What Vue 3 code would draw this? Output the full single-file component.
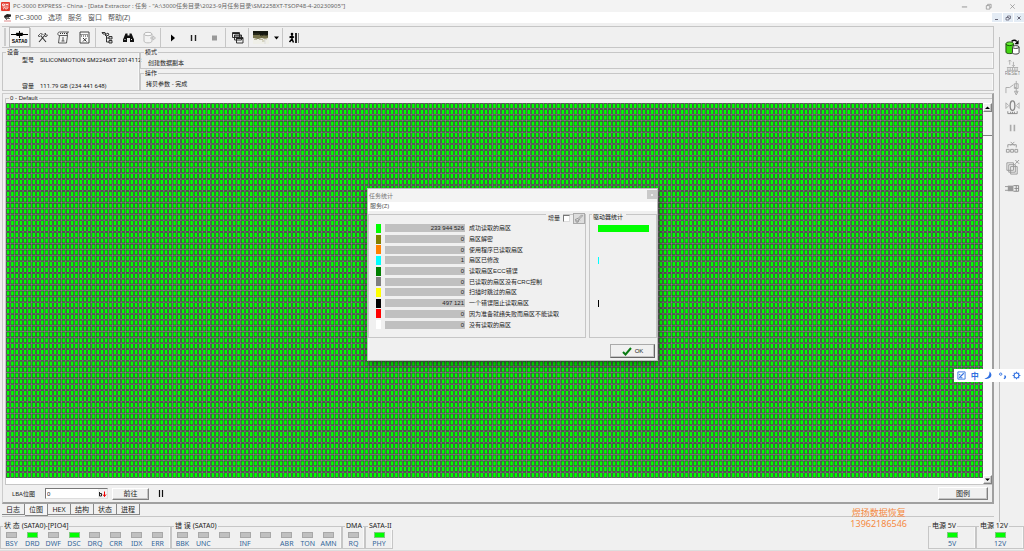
<script setup>
import { ref } from 'vue'

const menus = ['PC-3000', '选项', '服务', '窗口', '帮助(Z)']
const tabs = ['日志', '位图', 'HEX', '结构', '状态', '进程']
const activeTab = ref('位图')
const lba = ref('0')
const increment = ref(false)

// Sector map: 229 columns of 8 units and 64 rows of 11 units.
const columns = 229
const rows = 64
const mapWidth = columns * 8
const mapHeight = rows * 11
const verticals = Array.from({ length: columns + 1 }, (_, i) => `M${i * 8} 0V${mapHeight}`).join('')
const horizontals = Array.from({ length: rows + 1 }, (_, i) => `M0 ${i * 11}H${mapWidth}`).join('')
const gridLines = verticals + horizontals

const stats = [
  { color: '#00ff00', value: '233 944 526', label: '成功读取的扇区', bar: 51 },
  { color: '#808000', value: '0', label: '扇区解密', bar: 0 },
  { color: '#ff8000', value: '0', label: '使用程序已读取扇区', bar: 0 },
  { color: '#00ffff', value: '1', label: '扇区已修改', bar: 1 },
  { color: '#008000', value: '0', label: '读取扇区ECC错误', bar: 0 },
  { color: '#808080', value: '0', label: '已读取的扇区没有CRC控制', bar: 0 },
  { color: '#ffff00', value: '0', label: '扫描时跳过的扇区', bar: 0 },
  { color: '#000000', value: '497 121', label: '一个错误阻止读取扇区', bar: 1 },
  { color: '#ff0000', value: '0', label: '因为准备就绪失败而扇区不能读取', bar: 0 },
  { color: '#ffffff', value: '0', label: '没有读取的扇区', bar: 0 }
]

const led = (name, on = false) => ({ name, on })
const groups = [
  { title: '状 态 (SATA0)-[PIO4]', size: 'wide', leds: [led('BSY'), led('DRD', true), led('DWF'), led('DSC', true), led('DRQ'), led('CRR'), led('IDX'), led('ERR')] },
  { title: '错 误 (SATA0)', size: 'wide', leds: [led('BBK'), led('UNC'), led(''), led('INF'), led(''), led('ABR'), led('TON'), led('AMN')] },
  { title: 'DMA', size: 'small', leds: [led('RQ')] },
  { title: 'SATA-II', size: 'medium', leds: [led('PHY', true)] }
]
const power = [
  { title: '电源 5V', size: 'power', leds: [led('5V', true)] },
  { title: '电源 12V', size: 'power', leds: [led('12V', true)] }
]
</script>

<template>
  <div class="window">
    <header class="titlebar">
      <svg class="logo" viewBox="0 0 9 9"><rect width="9" height="9" rx="1" fill="#e33a2e" /><path d="M1.5 2h2v1.5h-2zM5 1.5v2.2M7 1.5v2.2M5 2.5h2M1.5 5h6M2 7.2l1.5-1.4L5 7.2l2.2-1.4" fill="none" stroke="#fff" stroke-width=".8" /></svg>
      <h1>PC-3000 EXPRESS - China - [Data Extractor : 任务 - "A:\3000任务目录\2023-9月任务目录\SM2258XT-TSOP48-4-20230905"]</h1>
      <div class="caption">
        <button aria-label="最小化"><svg viewBox="0 0 8 8"><path d="M1 4.5h6" stroke="#8a8a8a" fill="none" /></svg></button>
        <button aria-label="还原"><svg viewBox="0 0 8 8"><path d="M1.5 3h4v4h-4zM3 3V1.5h4V5.500H5.500" stroke="#8a8a8a" fill="none" stroke-width=".8" /></svg></button>
        <button aria-label="关闭"><svg viewBox="0 0 8 8"><path d="M1.500 1.500l5 5M6.500 1.500l-5 5" stroke="#8a8a8a" fill="none" stroke-width=".8" /></svg></button>
      </div>
    </header>

    <nav class="menubar">
      <svg class="logo" viewBox="0 0 9 9"><path d="M1 3l3-2 4 0.500v2L5 4.500 1.500 5z" fill="#222" /><path d="M2 5.500h5M3 7l3-3" stroke="#666" /><path d="M1 8h7" stroke="#d88" /></svg>
      <button v-for="m in menus" :key="m">{{ m }}</button>
      <div class="mdi">
        <button aria-label="最小化窗口"><svg viewBox="0 0 8 8"><path d="M2 5.500h3" stroke="#667" /></svg></button>
        <button aria-label="还原窗口"><svg viewBox="0 0 8 8"><path d="M2 3.500h3v2.500H2zM3.500 3.500V2h3v2.500H5" stroke="#667" fill="none" stroke-width=".8" /></svg></button>
        <button aria-label="关闭窗口"><svg viewBox="0 0 8 8"><path d="M2.500 2.500l3 3M5.500 2.500l-3 3" stroke="#667" /></svg></button>
      </div>
    </nav>

    <div class="workspace">
      <main>
        <div class="toolbar">
          <i class="grip"></i>
          <button class="sata pressed" aria-label="SATA0">
            <svg viewBox="0 0 17 7"><path d="M0 3.500h17M8.500 0v7M5 2.300h7" stroke="#000" fill="none" /><path d="M4 3.500l2-1.500h5l2 1.500-2 1.500H6z" /></svg>
            <span>SATA0</span>
          </button>
          <i class="sep"></i>
          <button aria-label="工具"><svg viewBox="0 0 13 13"><path d="M3 11l6-7M10 11L5 5" stroke="#333" fill="none" stroke-width="1.100" /><path d="M2 5l2.500-2.500 2 .5-2.500 2.500zM8 3.500L9.500 2v2h2l-1 1.500H9z" fill="#fff" stroke="#333" stroke-width=".8" /></svg></button>
          <button aria-label="脚本"><svg viewBox="0 0 13 13"><path d="M2.500 4.500h8L9.500 12h-8zM2.500 4.500C0 4.500 .5 1 2.500 1h9c-1 0-1.500 2-1 3.500" fill="#f4f4f4" stroke="#333" stroke-width=".8" /><path d="M3 2.500h7" stroke="#333" stroke-dasharray="1 1" /><path d="M6 6v4M4.500 10h3" stroke="#555" /></svg></button>
          <button aria-label="资源"><svg viewBox="0 0 13 13"><path d="M2 1h9v11H2z" fill="#f8f8f8" stroke="#333" stroke-width=".9" /><path d="M2.500 3.500h8M3 5h7" stroke="#333" stroke-dasharray="1 1" /><path d="M5 7l3.500 3.500M8.500 7L5 10.500" stroke="#333" /></svg></button>
          <i class="sep"></i>
          <button aria-label="对象树"><svg viewBox="0 0 13 13"><path d="M1 1.500h3l1 1.500H2zM4 4l3-2 1 2-3 1zM5.500 5v6h3M5.500 7h3" stroke="#222" fill="none" stroke-width=".9" /><path d="M8 5.500h3V8H8zM8 9.500h3V12H8z" fill="#ccc" stroke="#222" stroke-width=".9" /></svg></button>
          <button aria-label="查找"><svg viewBox="0 0 13 13"><path d="M3.500 2.500h2v2h2v-2h2l2.500 6V11H8V7H5v4H1V8.500z" fill="#111" /><path d="M2.500 8.500h1M9 8.500h1" stroke="#eee" /></svg></button>
          <button aria-label="数据库"><svg viewBox="0 0 13 13"><path d="M1 3v7c0 2.500 8 2.500 8 0V3" fill="#f3f3f3" stroke="#bbb" /><ellipse cx="5" cy="3" rx="4" ry="1.700" fill="#fafafa" stroke="#bbb" /><path d="M7 7h3V5l2.500 2L10 9V7" stroke="#bbb" fill="#eee" /></svg></button>
          <i class="sep"></i>
          <button aria-label="开始"><svg viewBox="0 0 13 13"><path d="M5 3.500l4 3.500-4 3.500z" /></svg></button>
          <button aria-label="暂停"><svg viewBox="0 0 13 13"><path d="M4.500 4v6M8.500 4v6" stroke="#222" stroke-width="1.400" /></svg></button>
          <button aria-label="停止" disabled><svg viewBox="0 0 13 13"><rect x="4" y="4.500" width="5" height="5" fill="#999" /></svg></button>
          <i class="sep"></i>
          <button aria-label="窗口列表"><svg viewBox="0 0 13 13"><g fill="#eee" stroke="#222" stroke-width=".9"><path d="M1.500 1.500h7v5h-7zM3.500 4h7v5h-7zM5.500 6.500h6.500V12H5.500z" /></g><path d="M1.500 2.500h7M3.500 5h7M5.500 7.500H12" stroke="#222" /></svg></button>
          <i class="sep"></i>
          <button aria-label="位图视图"><svg class="picture" viewBox="0 0 16 14"><rect width="16" height="14" fill="#efefe8" /><path d="M0 1h15v4H0z" fill="#15180f" /><path d="M0 5h15v3l-3 1-3-1-4 1-5-1z" fill="#77734b" /><path d="M0 4h6l2 2 3-1 4 1" stroke="#3b3b25" fill="none" /><path d="M1 9.500h3m2 0h4m1-.5h3M9 11h3" stroke="#bbb79b" /><path d="M12 9v5" stroke="#ddd" /></svg></button>
          <button class="narrow" aria-label="视图选项"><svg viewBox="0 0 7 13"><path d="M1 5.500h5L3.500 8.500z" /></svg></button>
          <i class="sep"></i>
          <button aria-label="退出"><svg viewBox="0 0 13 13"><circle cx="4" cy="3" r="1.300" /><path d="M4 4v4l1.500 3.500M4 8l-2.500 3M1.500 6.500L4 5l2 1.500" stroke="#000" fill="none" stroke-width="1.500" /><path d="M8 2v10" stroke="#111" stroke-width="1.800" /><path d="M10.500 2v10" stroke="#888" /></svg></button>
        </div>

        <section class="info">
          <fieldset class="device">
            <legend>设备</legend>
            <dl>
              <dt>型号</dt><dd>SILICONMOTION SM2246XT 2014112</dd>
              <dt>容量</dt><dd>111.79 GB (234 441 648)</dd>
            </dl>
          </fieldset>
          <div class="modes">
            <fieldset><legend>模式</legend><p>创建数据副本</p></fieldset>
            <fieldset><legend>操作</legend><p>拷贝参数 - 完成</p></fieldset>
          </div>
        </section>

        <section class="mapframe">
          <fieldset class="mapgroup">
            <legend>0 - Default</legend>
            <div class="maprow">
              <div class="map">
                <svg :viewBox="`0 0 ${mapWidth} ${mapHeight}`" preserveAspectRatio="none" role="img" aria-label="扇区位图">
                  <rect :width="mapWidth" :height="mapHeight" fill="#00ff00" />
                  <path :d="gridLines" stroke="#262626" stroke-width="3" />
                  <path :d="gridLines" stroke="#b4a6b4" stroke-width="1" />
                </svg>
              </div>
              <div class="scroll">
                <button aria-label="向上滚动"><svg viewBox="0 0 7 7"><path d="M1 5h5L3.500 2.500z" /></svg></button>
                <i class="thumb"></i>
                <button class="down" aria-label="向下滚动"><svg viewBox="0 0 7 7"><path d="M1 2.500h5L3.500 5z" /></svg></button>
              </div>
            </div>
          </fieldset>
          <div class="lba">
            <label for="lba">LBA位图</label>
            <div class="lbabox">
              <input id="lba" v-model="lba" type="text">
              <button aria-label="进制"><svg viewBox="0 0 9 8"><path d="M1.500 2v4M1.500 3.500h2v2.500h-2" stroke="#222" fill="none" /><path d="M6.500 1.500v5M5 4.500l1.500 2L8 4.500" stroke="#e00" fill="none" /></svg></button>
            </div>
            <button class="raised go">前往</button>
            <button class="pause" aria-label="暂停位图"><svg viewBox="0 0 6 7"><path d="M1.500 0v7M4.500 0v7" stroke="#111" stroke-width="1.200" /></svg></button>
            <button class="raised key">图例</button>
          </div>
        </section>

        <div class="tabs" role="tablist">
          <button v-for="t in tabs" :key="t" role="tab" :aria-selected="t === activeTab" :class="{ active: t === activeTab }" @click="activeTab = t">{{ t }}</button>
        </div>
      </main>

      <aside>
        <button aria-label="数据任务"><svg viewBox="0 0 16 18"><path d="M1 5v9c0 2 8 2 8 0V5" fill="#43d613" stroke="#164b08" /><ellipse cx="5" cy="5" rx="4" ry="2" fill="#62ed32" stroke="#164b08" /><path d="M8 8.500v6c0 2 7 2 7 0v-6" fill="#fff" stroke="#333" /><ellipse cx="11.500" cy="8.500" rx="3.500" ry="1.500" fill="#fff" stroke="#333" /><path d="M7 2.500c2-1.500 4-1.500 5.500 0" fill="none" stroke="#000" stroke-width="1.500" /><path d="M14.500 1v4.500H10z" /></svg></button>
        <button aria-label="复位"><svg viewBox="0 0 16 18"><path d="M5 1v5M3.500 2.500L5 1l1.500 1.500M9 3v5M7.500 6.500L9 8l1.500-1.500M2 9h12M2 12h12M3 9v3m2.500-3v3M8 9v3m2.500-3v3M13 9v3" stroke="#aaa" fill="none" stroke-width=".9" /><text x="8" y="17.500" text-anchor="middle" font-size="5" font-family="Liberation Sans, sans-serif" fill="#888">RESET</text></svg></button>
        <button aria-label="电源开关"><svg viewBox="0 0 16 18"><path d="M1 15V9h4l4-3M10 9h2M12 2v13M10 5h4v5h-4zM10 13h4l-2 4z" stroke="#aaa" fill="none" /></svg></button>
        <button aria-label="接口"><svg viewBox="0 0 16 18"><ellipse cx="8" cy="7" rx="2.500" ry="5" stroke="#888" stroke-width="1.400" fill="none" /><path d="M1 4v6l3-3zM15 4v6l-3-3z" stroke="#aaa" fill="none" /><path d="M3 13v2.500h10V13M6 13.500v2M8 13.500v2M10 13.500v2" stroke="#888" fill="none" /></svg></button>
        <button aria-label="暂停任务"><svg viewBox="0 0 16 18"><path d="M6 6v7M10 6v7" stroke="#aaa" stroke-width="1.700" /></svg></button>
        <button aria-label="扇区编辑"><svg viewBox="0 0 16 18"><path d="M1.500 11h3v3h-3zM6 11h3v3H6zM10.500 11h3v3h-3zM3 9V6h9v3M6 3l4 4M10 3L6 7" stroke="#999" fill="none" /></svg></button>
        <button aria-label="复制任务"><svg viewBox="0 0 16 18"><g stroke="#999" fill="#f0f0f0"><path d="M2 4h7v8H2zM4 6h7v8H4zM6 8h7v8H6z" /></g><path d="M11 1l4 4M15 1l-4 4" stroke="#999" /></svg></button>
        <button aria-label="连接器"><svg viewBox="0 0 16 18"><path d="M0 8h7M0 12h7" stroke="#999" /><path d="M3 7h6v6H3z" fill="#999" /><path d="M9 7h5.500v6H9M10 10h4.500M12 7v6" stroke="#888" fill="none" /></svg></button>
      </aside>
    </div>

    <footer>
      <fieldset v-for="g in groups" :key="g.title" :class="g.size">
        <legend>{{ g.title }}</legend>
        <div class="leds"><span v-for="(l, i) in g.leds" :key="i" class="led" :class="{ on: l.on }"><i></i>{{ l.name }}</span></div>
      </fieldset>
      <span class="spacer"></span>
      <fieldset v-for="g in power" :key="g.title" :class="g.size">
        <legend>{{ g.title }}</legend>
        <div class="leds"><span v-for="l in g.leds" :key="l.name" class="led" :class="{ on: l.on }"><i></i>{{ l.name }}</span></div>
      </fieldset>
    </footer>

    <div class="watermark"><div>煜扬数据恢复</div><div>13962186546</div></div>

    <div class="ime">
      <svg viewBox="0 0 10 10"><path d="M1 1h8v8H1z" fill="none" stroke="#2f6fe0" /><path d="M2.500 7.500l5-5M2.500 3.500l1 1M4 7.500h2" stroke="#2f6fe0" stroke-width="1.200" /></svg>
      <span>中</span>
      <svg viewBox="0 0 10 10"><path d="M6 .5c5 4 1 9.500-5.500 8C4.500 7.500 6.500 4.500 6 .5z" fill="#2f6fe0" /></svg>
      <svg viewBox="0 0 10 10"><circle cx="3" cy="3.500" r="1.300" fill="none" stroke="#2f6fe0" /><path d="M7 5.500c2 0 1.500 2.500-.5 3" fill="none" stroke="#2f6fe0" stroke-width="1.500" /></svg>
      <svg viewBox="0 0 10 10"><circle cx="5" cy="5" r="2.700" fill="none" stroke="#2f6fe0" stroke-width="1.200" /><path d="M5 .7v1.500M5 7.800v1.500M.7 5h1.500M7.800 5h1.500M2 2l1 1M7 7l1 1M8 2L7 3M3 7L2 8" stroke="#2f6fe0" stroke-width="1.200" /></svg>
    </div>

    <section class="dialog" role="dialog" aria-labelledby="dlg-title">
      <header>
        <h2 id="dlg-title">任务统计</h2>
        <button aria-label="关闭统计"><svg viewBox="0 0 8 8"><path d="M3 3l2 2M5 3L3 5" stroke="#eee" /></svg></button>
      </header>
      <nav><button>服务(Z)</button></nav>
      <div class="panes">
        <div class="pane stats">
          <div class="options">
            <label for="inc">增量</label>
            <input id="inc" v-model="increment" type="checkbox">
            <button aria-label="清除"><svg viewBox="0 0 10 10"><path d="M1 6l3-1 4-4 1 1-4 4-1 3H2zM4 5l2 2M2 7l2 1" fill="#eee" stroke="#777" stroke-width=".8" /></svg></button>
          </div>
          <table>
            <tbody>
              <tr v-for="s in stats" :key="s.label">
                <td class="swatch"><i :style="{ background: s.color }"></i></td>
                <td class="value"><span>{{ s.value }}</span></td>
                <th scope="row">{{ s.label }}</th>
              </tr>
            </tbody>
          </table>
        </div>
        <div class="pane drive">
          <h3>驱动器统计</h3>
          <div class="bars"><div v-for="s in stats" :key="s.label"><i :style="{ width: s.bar + 'px', background: s.color }"></i></div></div>
        </div>
      </div>
      <div class="actions"><button class="raised"><svg viewBox="0 0 10 9"><path d="M1 5l2.500 2.500L9 1" fill="none" stroke="#087a12" stroke-width="2" /></svg>OK</button></div>
    </section>
  </div>
</template>

<style>
body { margin: 0; overflow: hidden; background: #f0f0f0; }
</style>

<style scoped>
* { box-sizing: border-box; }
.window { position: relative; display: flex; flex-direction: column; height: 100vh; background: #f0f0f0; color: #222; font: 6px/8px "Liberation Sans", "Noto Sans CJK SC", sans-serif; }
button, input { margin: 0; padding: 0; border: 0; background: none; color: inherit; font: inherit; border-radius: 0; }
h1, h2, h3, p, dl, dd { margin: 0; font: inherit; }
svg { display: block; }
fieldset { min-width: 0; margin: 0; padding: 0; border: 1px solid #c6c6c6; box-shadow: inset -1px 0 #f8f8f8; }
legend { margin-left: 3px; padding: 0 1px; line-height: 8px; }
button { display: flex; align-items: center; justify-content: center; }

.titlebar { display: flex; align-items: center; height: 12px; padding-left: 1px; background: #f3f3f3; color: #666; font: 6px/12px "Noto Sans", "Noto Sans CJK SC", sans-serif; }
.logo { width: 9px; height: 9px; margin-right: 3px; }
.titlebar h1 { white-space: nowrap; }
.caption { display: flex; margin-left: auto; }
.caption button { width: 24px; height: 12px; }
.caption svg { width: 7px; height: 7px; }
.menubar { display: flex; align-items: center; height: 11px; flex: none; padding-left: 3px; background: #fff; color: #555; font: 7px/11px "Noto Sans", "Noto Sans CJK SC", sans-serif; }
.menubar > button { margin-right: 6px; }
.mdi { display: flex; gap: 1px; margin-left: auto; }
.mdi button { width: 10px; height: 9px; background: #e4ecf5; }
.mdi svg { width: 8px; height: 8px; }

.workspace { display: flex; flex: 1; min-height: 0; }
main { display: flex; flex: 1; min-width: 0; flex-direction: column; padding: 3px 5px 0 2px; }
.toolbar { display: flex; align-items: center; height: 22px; flex: none; border: 1px solid #c6c6c6; border-left: 0; }
.grip { width: 2px; height: 18px; margin: 0 3px 0 2px; border: 1px solid #ccc; }
.sep { width: 1px; height: 19px; margin-right: 1px; background: #c6c6c6; }
.toolbar button { width: 21px; height: 20px; }
.toolbar svg { width: 13px; height: 13px; }
.toolbar .narrow { width: 11px; }
.toolbar .narrow svg { width: 7px; }
.toolbar .picture { width: 16px; height: 14px; }
.toolbar .sata { flex-direction: column; border: 1px solid #bbb; background: #f7f7f7; color: #000; font-weight: bold; line-height: 6px; font-size: 5px; }
.toolbar .sata svg { width: 17px; height: 7px; }

.info { display: flex; height: 43px; flex: none; }
.device { width: 138px; height: 43px; }
.device dl { display: grid; grid-template: 26px 8px / 18px auto; padding: 0 0 0 19px; font-family: Roboto, "Noto Sans CJK SC", sans-serif; white-space: nowrap; }
.modes { display: flex; flex: 1; flex-direction: column; min-width: 0; }
.modes fieldset { height: 21px; }
.modes fieldset + fieldset { height: 22px; }
.modes p { padding: 3px 0 0 7px; }
.modes fieldset + fieldset p { padding-left: 5px; }

.mapframe { display: flex; flex: 1; min-height: 0; flex-direction: column; margin-top: 2px; padding: 0 0 0 2px; border: 1px solid #ccc; border-right: 2px solid #a0a0a0; border-bottom: 2px solid #a0a0a0; }
.mapgroup { display: flex; flex: 1; min-height: 0; flex-direction: column; border-right: 0; }
.maprow { display: flex; height: 100%; padding-top: 1px; }
.map { flex: 1; min-width: 0; padding-bottom: 6px; background: #fff; }
.map svg { width: 100%; height: 100%; }
.scroll { display: flex; flex-direction: column; width: 9px; background: #f9f9f9; }
.scroll button, .raised { border: 1px solid; border-color: #fff #808080 #808080 #fff; background: #f0f0f0; box-shadow: inset -1px -1px #c4c4c4; }
.scroll button { width: 9px; height: 9px; }
.scroll svg { width: 7px; height: 7px; }
.thumb { height: 24px; border-bottom: 1px solid #808080; background: #f3f3f3; }
.scroll .down { margin-top: auto; }
.lba { display: flex; align-items: center; height: 17px; flex: none; padding-left: 7px; }
.lba label { width: 33px; font-family: "Noto Sans", "Noto Sans CJK SC", sans-serif; }
.lbabox { display: flex; width: 63px; height: 11px; border: 1px solid; border-color: #777 #ddd #ddd #777; background: #fff; }
.lbabox input { flex: 1; min-width: 0; padding-left: 1px; outline: none; }
.lbabox button { width: 9px; background: #f0f0f0; }
.lbabox svg { width: 9px; height: 8px; }
.lba .raised { font-size: 7px; }
.go { width: 37px; height: 12px; margin-left: 4px; }
.pause { margin-left: 9px; }
.pause svg { width: 6px; height: 7px; }
.key { width: 50px; height: 13px; margin-left: auto; margin-right: 4px; }
.tabs { display: flex; height: 13px; flex: none; align-items: flex-start; margin-bottom: 5px; border-bottom: 1px solid #c6c6c6; font: 7px/9px "Noto Sans", "Noto Sans CJK SC", sans-serif; }
.tabs button { width: 23px; height: 11px; border-right: 1px solid #888; border-bottom: 1px solid #888; }
.tabs .active { height: 12px; background: #f5f5f5; }

aside { display: flex; width: 25px; flex: none; flex-direction: column; align-items: center; margin-top: 14px; border-left: 1px solid #bbb; }
aside button { width: 23px; height: 20px; }
aside svg { width: 15px; height: 17px; }

footer { display: flex; height: 29px; flex: none; padding-bottom: 1px; border-bottom: 1px solid #ddd; font: 7px/9px "Noto Sans", "Noto Sans CJK SC", sans-serif; }
footer fieldset { flex: none; }
footer legend { margin-left: 2px; white-space: nowrap; }
.wide { width: 171px; padding-right: 2px; }
.small { width: 23px; }
.medium { width: 28px; }
.power { width: 48px; }
.spacer { flex: 1; }
.leds { display: flex; padding-top: 2px; }
.led { display: flex; flex: 1; flex-direction: column; align-items: center; color: #336699; line-height: 9px; }
.led i { width: 11px; height: 6px; margin-bottom: 1px; border: 1px solid #a8a8a8; background: #c0c0c0; }
.led.on i { background: #00ff00; border-color: #7fc87f; }

.watermark { position: absolute; right: 117px; bottom: 22px; color: #f58a42; font: 9px/11px "Noto Sans", "Noto Sans CJK SC", sans-serif; text-align: center; }
.ime { position: absolute; right: 0; top: 369px; display: flex; align-items: center; justify-content: space-around; width: 70px; height: 13px; background: #fff; color: #2f6fe0; font: bold 8px/12px "Noto Sans CJK SC", sans-serif; }
.ime svg { width: 9px; height: 9px; }

.dialog { position: absolute; top: 188px; left: 50%; display: flex; width: 291px; height: 173px; margin-left: -145px; flex-direction: column; border: 1px solid #bbb; background: #f0f0f0; box-shadow: 0 3px 8px rgba(0, 0, 0, .45); }
.dialog header { display: flex; height: 13px; align-items: center; justify-content: space-between; padding-left: 1px; background: #f3f3f3; color: #777; font: 6px/12px "Noto Sans", "Noto Sans CJK SC", sans-serif; }
.dialog header button { width: 10px; height: 9px; margin-bottom: 2px; background: #c9c9c9; }
.dialog header svg { width: 8px; height: 8px; }
.dialog nav { height: 9px; padding-left: 2px; background: #fff; color: #555; font: 6px/9px "Noto Sans", "Noto Sans CJK SC", sans-serif; }
.panes { display: flex; gap: 3px; height: 124px; margin-top: 3px; }
.pane { border: 1px solid #c6c6c6; }
.stats { width: 218px; }
.drive { flex: 1; }
.options { display: flex; height: 10px; align-items: center; justify-content: flex-end; margin-top: -2px; }
.options label { padding: 0 3px 0 2px; background: #f0f0f0; }
.options input { width: 7px; height: 7px; margin-right: 3px; border: 1px solid; border-color: #777 #ddd #ddd #777; background: #fff; appearance: none; }
.options button { width: 12px; height: 11px; border: 1px solid #aaa; background: #ddd; }
.options svg { width: 10px; height: 9px; }
table { width: 206px; height: 107px; margin-left: 7px; border-collapse: collapse; table-layout: fixed; }
td, th { padding: 0; font-weight: normal; text-align: left; white-space: nowrap; }
.swatch { width: 9px; }
.swatch i { display: block; width: 5px; height: 9px; }
.value { width: 80px; }
.value span { display: block; height: 8px; padding-right: 1px; background: #c0c0c0; text-align: right; }
th { padding-left: 4px; }
.drive h3 { width: 34px; height: 10px; margin: -2px 0 0 2px; padding-left: 1px; background: #f0f0f0; }
.bars { display: grid; grid-template-rows: repeat(10, 1fr); height: 107px; padding-left: 8px; }
.bars div { display: flex; align-items: center; }
.bars i { height: 7px; }
.actions { display: flex; justify-content: flex-end; margin-top: auto; padding: 0 2px 2px 0; }
.actions button { width: 45px; height: 14px; gap: 3px; border-color: #aaa #666 #666 #aaa; }
.actions svg { width: 10px; height: 9px; }
</style>
